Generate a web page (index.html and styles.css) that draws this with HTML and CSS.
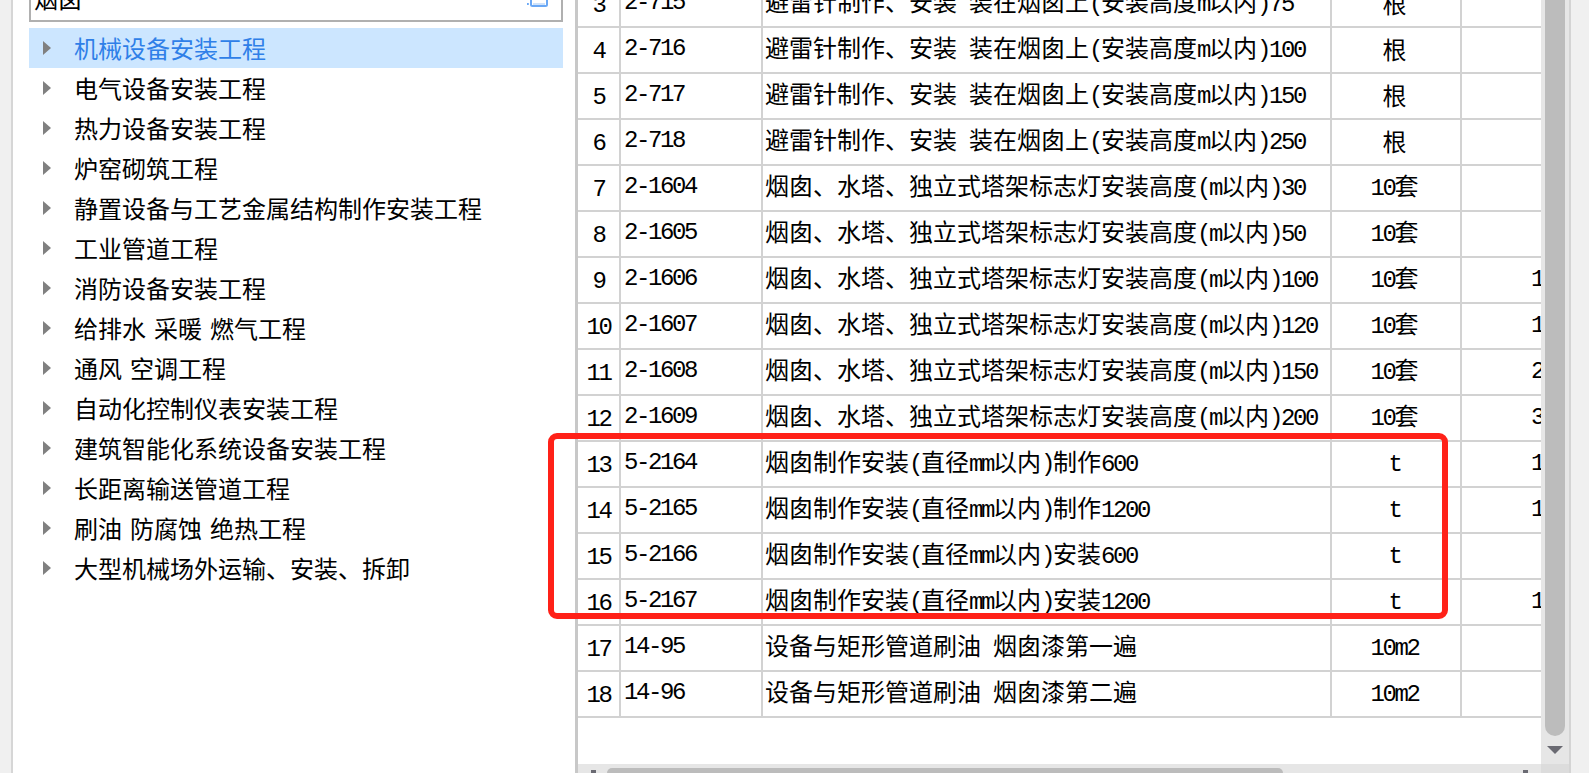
FILE: index.html
```html
<!DOCTYPE html>
<html lang="zh-CN">
<head>
<meta charset="utf-8">
<title>定额查询</title>
<link rel="stylesheet" href="styles.css">
</head>
<body>
<div class="app">
  <div class="strip"></div>
  <aside class="side">
    <div class="search">
      <span class="search-text">烟囱</span>
      <svg class="search-icon" viewBox="0 0 21 21" width="21" height="21"><path d="M4 12v6.500a1.500 1.500 0 0 0 1.500 1.500h13a1.500 1.500 0 0 0 1.500-1.500V12M0.800 17v2" fill="none" stroke="#6aa8f5" stroke-width="2"/><path d="M6 18h12" stroke="#cfe3fb" stroke-width="2"/></svg>
    </div>
    <ul class="tree">
      <li class="sel">机械设备安装工程</li>
      <li>电气设备安装工程</li>
      <li>热力设备安装工程</li>
      <li>炉窑砌筑工程</li>
      <li>静置设备与工艺金属结构制作安装工程</li>
      <li>工业管道工程</li>
      <li>消防设备安装工程</li>
      <li>给排水 采暖 燃气工程</li>
      <li>通风 空调工程</li>
      <li>自动化控制仪表安装工程</li>
      <li>建筑智能化系统设备安装工程</li>
      <li>长距离输送管道工程</li>
      <li>刷油 防腐蚀 绝热工程</li>
      <li>大型机械场外运输、安装、拆卸</li>
    </ul>
  </aside>
  <main class="main">
    <div class="upper">
      <div class="view">
        <table class="grid">
          <colgroup><col class="c1"><col class="c2"><col class="c3"><col class="c4"><col class="c5"></colgroup>
          <tbody>
            <tr><td class="n">3</td><td class="code">2-715</td><td class="name">避雷针制作<span class="dun">、</span>安装<span class="a"> </span>装在烟囱上<span class="a">(</span>安装高度<span class="a">m</span>以内<span class="a">)75</span></td><td class="unit">根</td><td class="val"></td></tr>
            <tr><td class="n">4</td><td class="code">2-716</td><td class="name">避雷针制作<span class="dun">、</span>安装<span class="a"> </span>装在烟囱上<span class="a">(</span>安装高度<span class="a">m</span>以内<span class="a">)100</span></td><td class="unit">根</td><td class="val"></td></tr>
            <tr><td class="n">5</td><td class="code">2-717</td><td class="name">避雷针制作<span class="dun">、</span>安装<span class="a"> </span>装在烟囱上<span class="a">(</span>安装高度<span class="a">m</span>以内<span class="a">)150</span></td><td class="unit">根</td><td class="val"></td></tr>
            <tr><td class="n">6</td><td class="code">2-718</td><td class="name">避雷针制作<span class="dun">、</span>安装<span class="a"> </span>装在烟囱上<span class="a">(</span>安装高度<span class="a">m</span>以内<span class="a">)250</span></td><td class="unit">根</td><td class="val"></td></tr>
            <tr><td class="n">7</td><td class="code">2-1604</td><td class="name">烟囱<span class="dun">、</span>水塔<span class="dun">、</span>独立式塔架标志灯安装高度<span class="a">(m</span>以内<span class="a">)30</span></td><td class="unit"><span class="a">10</span>套</td><td class="val"></td></tr>
            <tr><td class="n">8</td><td class="code">2-1605</td><td class="name">烟囱<span class="dun">、</span>水塔<span class="dun">、</span>独立式塔架标志灯安装高度<span class="a">(m</span>以内<span class="a">)50</span></td><td class="unit"><span class="a">10</span>套</td><td class="val"></td></tr>
            <tr><td class="n">9</td><td class="code">2-1606</td><td class="name">烟囱<span class="dun">、</span>水塔<span class="dun">、</span>独立式塔架标志灯安装高度<span class="a">(m</span>以内<span class="a">)100</span></td><td class="unit"><span class="a">10</span>套</td><td class="val">1</td></tr>
            <tr><td class="n">10</td><td class="code">2-1607</td><td class="name">烟囱<span class="dun">、</span>水塔<span class="dun">、</span>独立式塔架标志灯安装高度<span class="a">(m</span>以内<span class="a">)120</span></td><td class="unit"><span class="a">10</span>套</td><td class="val">1</td></tr>
            <tr><td class="n">11</td><td class="code">2-1608</td><td class="name">烟囱<span class="dun">、</span>水塔<span class="dun">、</span>独立式塔架标志灯安装高度<span class="a">(m</span>以内<span class="a">)150</span></td><td class="unit"><span class="a">10</span>套</td><td class="val">2</td></tr>
            <tr><td class="n">12</td><td class="code">2-1609</td><td class="name">烟囱<span class="dun">、</span>水塔<span class="dun">、</span>独立式塔架标志灯安装高度<span class="a">(m</span>以内<span class="a">)200</span></td><td class="unit"><span class="a">10</span>套</td><td class="val">3</td></tr>
            <tr><td class="n">13</td><td class="code">5-2164</td><td class="name">烟囱制作安装<span class="a">(</span>直径<span class="a">mm</span>以内<span class="a">)</span>制作<span class="a">600</span></td><td class="unit"><span class="a">t</span></td><td class="val">1</td></tr>
            <tr><td class="n">14</td><td class="code">5-2165</td><td class="name">烟囱制作安装<span class="a">(</span>直径<span class="a">mm</span>以内<span class="a">)</span>制作<span class="a">1200</span></td><td class="unit"><span class="a">t</span></td><td class="val">1</td></tr>
            <tr><td class="n">15</td><td class="code">5-2166</td><td class="name">烟囱制作安装<span class="a">(</span>直径<span class="a">mm</span>以内<span class="a">)</span>安装<span class="a">600</span></td><td class="unit"><span class="a">t</span></td><td class="val"></td></tr>
            <tr><td class="n">16</td><td class="code">5-2167</td><td class="name">烟囱制作安装<span class="a">(</span>直径<span class="a">mm</span>以内<span class="a">)</span>安装<span class="a">1200</span></td><td class="unit"><span class="a">t</span></td><td class="val">1</td></tr>
            <tr><td class="n">17</td><td class="code">14-95</td><td class="name">设备与矩形管道刷油<span class="a"> </span>烟囱漆第一遍</td><td class="unit"><span class="a">10m2</span></td><td class="val"></td></tr>
            <tr><td class="n">18</td><td class="code">14-96</td><td class="name">设备与矩形管道刷油<span class="a"> </span>烟囱漆第二遍</td><td class="unit"><span class="a">10m2</span></td><td class="val"></td></tr>
          </tbody>
        </table>
      </div>
      <div class="vbar">
        <div class="vthumb"></div>
        <div class="varrow"></div>
      </div>
    </div>
    <div class="hbar">
      <div class="hleft"><i class="harrow"></i></div>
      <div class="hthumb"></div>
      <div class="hright"><i class="harrow"></i></div>
      <div class="corner"></div>
    </div>
  </main>
  <div class="rail"></div>
  <div class="mark"></div>
</div>
</body>
</html>
```
FILE: styles.css
```css
* { box-sizing: border-box; }
html, body { margin: 0; height: 100%; overflow: hidden; background: #fff; }
body { font-family: "Noto Sans CJK SC", sans-serif; color: #000; }

.app { position: relative; display: flex; width: 1589px; height: 773px; overflow: hidden; }

.strip { width: 13px; flex: none; background: #f0f0f0; border-right: 2px solid #d6d6d6; }

.side { width: 562px; flex: none; padding: 0 12px 0 16px; background: #fff; overflow: hidden; }

.search {
  display: flex;
  height: 38px;
  margin-top: -16px;
  padding: 0 13px 0 3px;
  border: 2px solid #b0b0b0;
  font-size: 24px;
  line-height: 24px;
  overflow: hidden;
}
.search-text { flex: none; }
.search-icon { flex: none; margin-left: auto; }

.tree { list-style: none; margin: 6px 0 0; padding: 0; }
.tree li {
  display: flex;
  align-items: center;
  height: 40px;
  padding-left: 14px;
  font-size: 24px;
  line-height: 40px;
  word-spacing: 2.6px;
  white-space: nowrap;
}
.tree li::before {
  content: "";
  flex: none;
  width: 0;
  height: 0;
  margin-right: 23px;
  border-left: 8px solid #808080;
  border-top: 7px solid transparent;
  border-bottom: 7px solid transparent;
}
.tree .sel { background: #cce6ff; color: #2f7fe8; }

.main {
  display: flex;
  flex-direction: column;
  width: 994px;
  flex: none;
  border-left: 3px solid #c8c8c8;
  overflow: hidden;
}
.upper { display: flex; height: 764px; flex: none; }
.view { width: 963px; flex: none; overflow: hidden; background: #fff; }

.grid {
  width: 963px;
  margin-top: -18px;
  border-collapse: separate;
  border-spacing: 0;
  table-layout: fixed;
  font-family: "Noto Sans CJK SC", monospace;
  font-size: 24px;
}
.c1 { width: 43px; }
.c2 { width: 142px; }
.c3 { width: 569px; }
.c4 { width: 130px; }
.c5 { width: 79px; }
.grid td {
  height: 46px;
  padding: 0;
  border-right: 2px solid #d2d2d2;
  border-bottom: 2px solid #d2d2d2;
  white-space: nowrap;
  overflow: hidden;
  line-height: 24px;
  vertical-align: middle;
}
.a, .grid td.n, .grid td.code, .grid td.val {
  font-family: "Liberation Mono", monospace;
  letter-spacing: -2.4px;
  white-space: pre;
}
.grid td.n { text-align: center; padding-top: 3px; }
.grid td.code { padding-left: 3px; padding-bottom: 2px; }
.grid td.name { padding-left: 2px; padding-bottom: 3px; }
.grid td.unit { text-align: center; padding: 0 3px 2px 0; }
.grid td.val { border-right: 0; padding-left: 69px; }
.dun { font-family: "Noto Sans CJK TC", sans-serif; }

.vbar { position: relative; width: 28px; flex: none; background: #e6e6e6; padding: 0 4px; }
.vthumb { height: 736px; background: #bcbcbc; border-radius: 0 0 10px 10px; }
.varrow {
  position: absolute;
  left: 6px;
  top: 746px;
  width: 0;
  height: 0;
  border-left: 8px solid transparent;
  border-right: 8px solid transparent;
  border-top: 8px solid #6a6a72;
}

.hbar { display: flex; height: 9px; flex: none; background: #e6e6e6; }
.hleft { width: 29px; flex: none; overflow: hidden; padding: 6px 0 0 13px; }
.hthumb { width: 676px; flex: none; margin-top: 4px; background: #bcbcbc; border-radius: 6px 6px 0 0; }
.hright { width: 258px; flex: none; overflow: hidden; padding: 6px 0 0 240px; }
.harrow { display: block; width: 5px; height: 5px; background: #6a6a72; }
.corner { width: 28px; flex: none; background: #dcdcdc; }

.mark {
  position: absolute;
  left: 548px;
  top: 433px;
  width: 900px;
  height: 186px;
  border: 6px solid #ff2118;
  border-radius: 9px;
}

.rail { flex: 1; background: #f0f0f0; border-left: 2px solid #d4d4d4; }
```
